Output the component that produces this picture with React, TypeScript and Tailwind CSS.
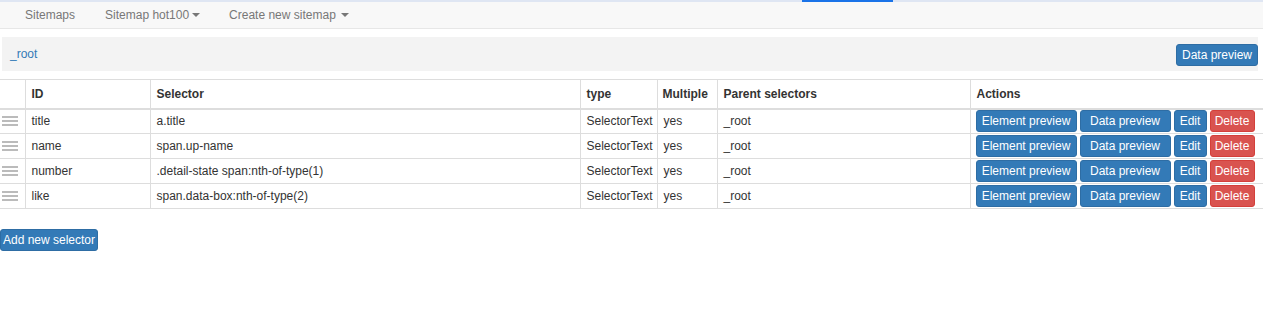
import React from "react";

const rows = [
  { id: "title", sel: "a.title" },
  { id: "name", sel: "span.up-name" },
  { id: "number", sel: ".detail-state span:nth-of-type(1)" },
  { id: "like", sel: "span.data-box:nth-of-type(2)" },
];

function Caret() {
  return (
    <span className="inline-block ml-[3px] align-middle w-0 h-0 border-l-[4px] border-r-[4px] border-t-[4px] border-l-transparent border-r-transparent border-t-[#777]" />
  );
}

function Handle() {
  return (
    <div className="flex flex-col gap-[2px] w-[16px] ml-[2px]">
      <div className="h-[2px] bg-[#bbb]" />
      <div className="h-[2px] bg-[#bbb]" />
      <div className="h-[2px] bg-[#bbb]" />
    </div>
  );
}

const blueBtn =
  "h-[22px] flex items-center justify-center rounded-[3px] bg-[#337ab7] border border-[#2e6da4] text-white text-[12px] leading-none";
const redBtn =
  "h-[22px] flex items-center justify-center rounded-[3px] bg-[#d9534f] border border-[#d43f3a] text-white text-[12px] leading-none";

export default function App() {
  return (
    <div
      className="w-[1263px] h-[331px] bg-white text-[#333] text-[12px]"
      style={{ fontFamily: '"Liberation Sans", Arial, sans-serif' }}
    >
      {/* top strip */}
      <div className="h-[2px] bg-[#dfe6f3] flex">
        <div className="ml-[802px] w-[91px] h-[2px] bg-[#1a73e8]" />
      </div>
      {/* nav */}
      <div className="h-[27px] bg-[#f8f8f8] border-b border-[#e7e7e7] flex items-center text-[#777]">
        <span className="ml-[25px]">Sitemaps</span>
        <span className="ml-[30px] flex items-center">
          Sitemap hot100
          <Caret />
        </span>
        <span className="ml-[29px] flex items-center">
          Create new sitemap
          <span className="ml-[2px]" />
          <Caret />
        </span>
      </div>
      {/* breadcrumb */}
      <div className="mt-[8px] ml-[2px] mr-[5px] h-[34px] bg-[#f3f3f3] flex items-center justify-between">
        <span className="ml-[8px] text-[#337ab7]">_root</span>
        <button className={blueBtn + " w-[82px] mt-[2px]"}>Data preview</button>
      </div>
      {/* table */}
      <table className="mt-[8px] w-[1263px] border-collapse table-fixed">
        <colgroup>
          <col className="w-[25px]" />
          <col className="w-[125px]" />
          <col className="w-[430px]" />
          <col className="w-[77px]" />
          <col className="w-[60px]" />
          <col className="w-[253px]" />
          <col className="w-[293px]" />
        </colgroup>
        <thead>
          <tr className="h-[29px] border-t border-[#ddd] border-b-2 border-b-[#ddd] font-bold">
            <th className="border-r border-[#ddd]" />
            <th className="text-left font-bold pl-[6px] border-r border-[#ddd]">ID</th>
            <th className="text-left font-bold pl-[6px] border-r border-[#ddd]">Selector</th>
            <th className="text-left font-bold pl-[6px] border-r border-[#ddd]">type</th>
            <th className="text-left font-bold pl-[5px] border-r border-[#ddd]">Multiple</th>
            <th className="text-left font-bold pl-[6px] border-r border-[#ddd]">Parent selectors</th>
            <th className="text-left font-bold pl-[6px]">Actions</th>
          </tr>
        </thead>
        <tbody>
          {rows.map((r) => (
            <tr key={r.id} className="h-[25px] border-b border-[#ddd]">
              <td className="border-r border-[#ddd] p-0">
                <Handle />
              </td>
              <td className="pl-[6px] border-r border-[#ddd]">{r.id}</td>
              <td className="pl-[6px] border-r border-[#ddd]">{r.sel}</td>
              <td className="pl-[6px] border-r border-[#ddd]">SelectorText</td>
              <td className="pl-[6px] border-r border-[#ddd]">yes</td>
              <td className="pl-[6px] border-r border-[#ddd]">_root</td>
              <td className="p-0">
                <div className="flex gap-[3px] ml-[5px]">
                  <button className={blueBtn + " w-[101px]"}>Element preview</button>
                  <button className={blueBtn + " w-[91px]"}>Data preview</button>
                  <button className={blueBtn + " w-[33px]"}>Edit</button>
                  <button className={redBtn + " w-[45px]"}>Delete</button>
                </div>
              </td>
            </tr>
          ))}
        </tbody>
      </table>
      <button className={blueBtn + " w-[98px] mt-[20px]"}>Add new selector</button>
    </div>
  );
}
